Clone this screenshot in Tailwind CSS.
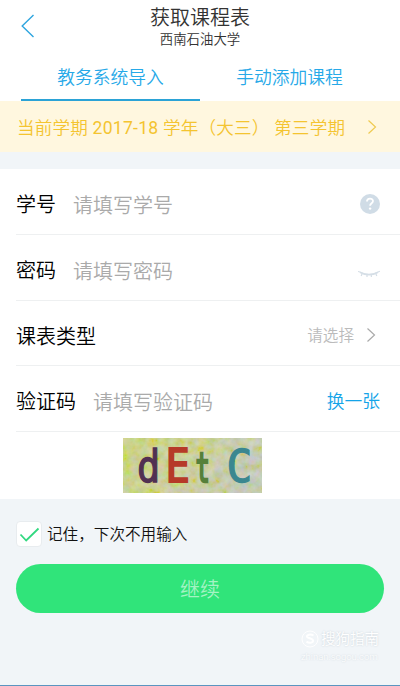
<!DOCTYPE html>
<html lang="zh-CN">
<head>
  <meta charset="UTF-8" />
  <meta name="viewport" content="width=device-width, initial-scale=1" />
  <title>获取课程表</title>

  <!-- Tailwind CSS -->
  <script src="https://cdn.jsdelivr.net/npm/@tailwindcss/browser@4"></script>
</head>

<body class="flex flex-col h-[686px] overflow-hidden bg-[#f1f5f8] text-black font-[350] font-[Roboto,'Noto_Sans_CJK_SC',sans-serif]">

  <!-- Title Bar -->
  <header class="flex h-[53px] bg-white text-[#333] shrink-0">
    <button class="w-16 pl-5 flex items-start pt-3.5">
      <svg class="w-4 h-6" viewBox="0 0 16 24" fill="none" stroke="#2ea5df" stroke-width="1.4"><path d="M13.5 1 2.2 12l11.3 11" /></svg>
    </button>
    <div class="flex-1 text-center pt-[7px]">
      <h1 class="text-[20px] leading-[22px]">获取课程表</h1>
      <p class="text-[13.4px] leading-[22px]">西南石油大学</p>
    </div>
    <div class="w-16"></div>
  </header>

  <!-- Tabs -->
  <nav class="flex h-12 px-[21px] bg-white text-[#27a9e8] text-[17.8px] shrink-0">
    <button class="w-[179px] border-b-2 border-[#2ba3d6] pt-1 leading-[42px]">教务系统导入</button>
    <button class="w-[179px] border-b-2 border-transparent pt-1 leading-[42px]">手动添加课程</button>
  </nav>

  <!-- Current Term -->
  <div class="flex items-center justify-between h-[51px] pl-[17px] pr-[23px] bg-[#fff7df] text-[#f4c430] text-[17.6px] shrink-0">
    <span class="whitespace-pre pt-1 tracking-[0.18px]">当前学期 <span class="font-normal tracking-[0.25px]">2017-18</span> 学年（大三） 第三学期</span>
    <svg class="w-2.5 h-4" viewBox="0 0 10 16" fill="none" stroke="#efca50" stroke-width="1.2"><path d="m1.5 1.5 7 6.5-7 6.5" /></svg>
  </div>

  <!-- Form -->
  <form class="mt-[17px] h-[330px] pl-4 bg-white text-[20px] shrink-0">
    <div class="flex items-center h-[66px] pt-1 pr-5 border-b border-[#eef0f1]">
      <label class="pt-0.5">学号</label>
      <span class="ml-[17px] flex-1 text-[#aaa] pt-1">请填写学号</span>
      <svg class="w-5 h-5" viewBox="0 0 20 20" fill="none"><circle cx="10" cy="10" r="10" fill="#d0dce6" /><path d="M7 7.6c0-4 6-3.9 6-.5 0 2.2-2.9 2.2-2.9 4.6" stroke="#fff" stroke-width="1.8" /><circle cx="10.1" cy="14.6" r="1.2" fill="#fff" /></svg>
    </div>
    <div class="flex items-center h-[66px] pt-1 pr-5 border-b border-[#eef0f1]">
      <label class="pt-0.5">密码</label>
      <span class="ml-[17px] flex-1 text-[#aaa] pt-1">请填写密码</span>
      <svg class="w-[22px] h-2 mt-2" viewBox="0 0 22 8" fill="none" stroke="#d5dee6" stroke-width="1.2"><path d="M0 1.5 2 2c5.5 3 12.5 3 18 0l2-.8M4.3 3.2 3.2 6M9 4.5v2.6M13.2 4.5l.2 2.5M17.6 3.3 18.8 6" /><path d="M2 2.4c6 3.2 12 3.2 18 0" stroke-width="1.6" /></svg>
    </div>
    <div class="flex items-center h-[65px] pt-1 pr-6 border-b border-[#eef0f1]">
      <label class="flex-1 pt-1">课表类型</label>
      <span class="text-[15.6px] text-[#bbb] pt-1">请选择</span>
      <svg class="ml-3 w-2.5 h-4" viewBox="0 0 10 16" fill="none" stroke="#aaa" stroke-width="1.2"><path d="m1.5 1.5 7 6.5-7 6.5" /></svg>
    </div>
    <div class="flex items-center h-[66px] pt-1 pr-5 border-b border-[#eef0f1]">
      <label class="pt-0.5">验证码</label>
      <span class="ml-[17px] flex-1 text-[#aaa] pt-1">请填写验证码</span>
      <button type="button" class="pt-1 text-[17.8px] text-[#14a4e8]">换一张</button>
    </div>

    <!-- Captcha -->
    <div class="pt-1.5 pl-[107px]">
      <svg class="w-[139px] h-[55px]" viewBox="0 0 139 55">
        <defs>
          <linearGradient id="base" x1="0" y1="0" x2="1" y2=".3">
            <stop offset="0" stop-color="#bccc48" />
            <stop offset=".5" stop-color="#bfc878" />
            <stop offset="1" stop-color="#b0bba8" />
          </linearGradient>
          <filter id="noise" x="0" y="0" width="1" height="1">
            <feTurbulence type="fractalNoise" baseFrequency=".12" numOctaves="3" seed="4" />
            <feColorMatrix values=".7 0 0 0 .38  0 .5 0 0 .47  0 0 1.8 0 -.35  0 0 0 0 .45" />
          </filter>
        </defs>
        <rect width="139" height="55" fill="url(#base)" />
        <rect width="139" height="55" filter="url(#noise)" />
        <g font-family="DejaVu Sans Mono" stroke-width="1.3">
          <text transform="translate(14 43.5) scale(.86 1)" font-size="45" fill="#513052" stroke="#513052">d</text>
          <text transform="translate(42.5 44) scale(.86 1)" font-size="47" fill="#b63a28" stroke="#b63a28" stroke-width="2">E</text>
          <text transform="translate(72.5 43.5) scale(.58 1)" font-size="41" fill="#56803a" stroke="#56803a" stroke-width="2.4">t</text>
          <text transform="translate(103.5 43.5) scale(.95 1)" font-size="45" fill="#3b8790" stroke="#3b8790">C</text>
        </g>
      </svg>
    </div>
  </form>

  <!-- Remember -->
  <div class="flex items-center h-[65px] pl-4 pt-1 text-[15.6px] text-[#111] shrink-0">
    <span class="w-[26px] h-[26px] mr-[5px] rounded bg-white border border-[#e8ecef]">
      <svg viewBox="0 0 24 24" fill="none" stroke="#32d880" stroke-width="1.8"><path d="m3.500 12.500 5.700 6L21.500 6.500" /></svg>
    </span>
    <span class="pt-1">记住，下次不用输入</span>
  </div>

  <!-- Submit -->
  <button class="mx-4 h-[49px] pt-0.5 rounded-full bg-[#30e47a] text-[#a5f3c4] text-[20px] shrink-0">继续</button>

  <!-- Watermark -->
  <footer class="mt-auto h-[59px] pl-[301px] border-b border-[#5b95c0] text-white shrink-0">
    <div class="flex items-center gap-0.5 h-6">
      <svg class="w-[18px] h-[18px]" viewBox="0 0 18 18" fill="none" stroke="#fff"><circle cx="9" cy="9" r="8" /><path d="M12.5 5.5c-3-1.8-7-.8-6.5 1.2.5 1.8 6 1.5 6 4 0 2.3-4 2.6-6.5 1" stroke-width="2" /></svg>
      <span class="text-[14.5px] pt-0.5 [text-shadow:0_0_2px_#c3ccd3]">搜狗指南</span>
    </div>
    <p class="text-[9.5px] leading-3 [text-shadow:0_0_2px_#c3ccd3]">zhinan.sogou.com</p>
  </footer>

</body>
</html>
